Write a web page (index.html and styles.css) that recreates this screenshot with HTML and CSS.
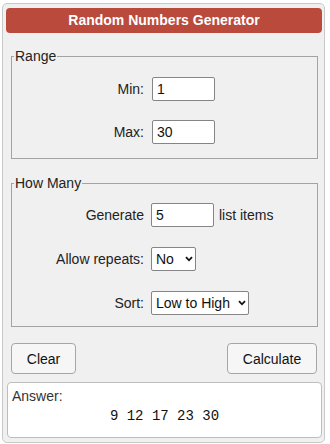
FILE: index.html
```html
<!DOCTYPE html>
<html lang="en">
<head>
    <meta charset="UTF-8">
    <meta name="viewport" content="width=device-width, initial-scale=1.0">
    <title>Random Numbers Generator</title>
    <link rel="stylesheet" href="styles.css">
</head>
<body>
    <div class="calc">
        <div class="calc-title">Random Numbers Generator</div>

        <fieldset class="group">
            <legend>Range</legend>
            <div class="rows rows-range">
                <label class="row-label" for="min">Min:</label>
                <div class="row-field"><input class="num" id="min" type="text" value="1"></div>
                <label class="row-label" for="max">Max:</label>
                <div class="row-field"><input class="num" id="max" type="text" value="30"></div>
            </div>
        </fieldset>

        <fieldset class="group group-many">
            <legend>How Many</legend>
            <div class="rows rows-many">
                <label class="row-label" for="count">Generate</label>
                <div class="row-field"><input class="num" id="count" type="text" value="5"><span>list items</span></div>
                <label class="row-label" for="repeats">Allow repeats:</label>
                <div class="row-field">
                    <span class="select-wrap">
                        <select class="pick pick-short" id="repeats">
                            <option>No</option>
                            <option>Yes</option>
                        </select>
                        <svg class="chevron" width="8" height="6" viewBox="0 0 8 6"><path d="M1 1.2 L4 4.3 L7 1.2" fill="none" stroke="#111" stroke-width="1.8"/></svg>
                    </span>
                </div>
                <label class="row-label" for="sort">Sort:</label>
                <div class="row-field">
                    <span class="select-wrap">
                        <select class="pick pick-long" id="sort">
                            <option>Low to High</option>
                            <option>High to Low</option>
                            <option>None</option>
                        </select>
                        <svg class="chevron" width="8" height="6" viewBox="0 0 8 6"><path d="M1 1.2 L4 4.3 L7 1.2" fill="none" stroke="#111" stroke-width="1.8"/></svg>
                    </span>
                </div>
            </div>
        </fieldset>

        <div class="actions">
            <button class="btn btn-clear" onclick="clearForm()">Clear</button>
            <button class="btn btn-calc" onclick="calculate()">Calculate</button>
        </div>

        <div class="answer">
            <div class="answer-label">Answer:</div>
            <div class="answer-value" id="answer">9 12 17 23 30</div>
        </div>
    </div>
    <script>
        function calculate() {
            const min = parseInt(document.getElementById('min').value, 10);
            const max = parseInt(document.getElementById('max').value, 10);
            const count = parseInt(document.getElementById('count').value, 10);
            const repeats = document.getElementById('repeats').value === 'Yes';
            const sort = document.getElementById('sort').value;
            const out = document.getElementById('answer');

            if (isNaN(min) || isNaN(max) || isNaN(count) || max < min) {
                out.textContent = 'Check the range';
                return;
            }
            if (!repeats && count > max - min + 1) {
                out.textContent = 'Range too small';
                return;
            }

            let nums = [];
            while (nums.length < count) {
                const n = min + Math.floor(Math.random() * (max - min + 1));
                if (repeats || !nums.includes(n)) nums.push(n);
            }
            if (sort === 'Low to High') nums.sort((a, b) => a - b);
            if (sort === 'High to Low') nums.sort((a, b) => b - a);
            out.textContent = nums.join(' ');
        }

        function clearForm() {
            document.getElementById('min').value = '';
            document.getElementById('max').value = '';
            document.getElementById('count').value = '';
            document.getElementById('answer').textContent = '';
        }
    </script>
</body>
</html>
```

FILE: styles.css
```css
body {
    margin: 0;
    padding: 3px 0 0 2px;
    font-family: 'Liberation Sans', Arial, sans-serif;
    font-size: 14px;
    color: #222;
    background: #fff;
}

.calc {
    width: 323px;
    box-sizing: border-box;
    background: #f0f0f0;
    border: 1px solid #c9c9c9;
    border-radius: 5px;
    padding: 4px 2px 4px 3px;
}

.calc-title {
    height: 25px;
    line-height: 25px;
    background: #b94a3c;
    color: #fff;
    font-weight: bold;
    text-align: center;
    border-radius: 4px;
}

.group {
    margin: 15px 4px 0 5px;
    padding: 0 2px 14px 2px;
    border: 1px solid #a3a3a3;
    min-width: 0;
}

.group legend {
    padding: 0 1px;
    line-height: 16px;
    color: #222;
}

.group-many {
    margin-top: 16px;
    padding-bottom: 11px;
}

.rows {
    display: grid;
    grid-template-columns: 130px auto;
    column-gap: 8px;
    align-items: center;
}

.rows-range {
    padding-top: 13px;
    row-gap: 19px;
}

.rows-many {
    padding-top: 12px;
    row-gap: 20px;
    column-gap: 7px;
}

.row-label {
    text-align: right;
}

.row-field {
    display: flex;
    align-items: center;
    gap: 5px;
    height: 24px;
}

.num {
    box-sizing: border-box;
    width: 63px;
    height: 24px;
    padding: 0 4px;
    border: 1px solid #858585;
    border-radius: 2px;
    background: #fff;
    font-family: inherit;
    font-size: 14px;
    color: #111;
}

.select-wrap {
    position: relative;
    display: inline-block;
    height: 24px;
}

.pick {
    -webkit-appearance: none;
    appearance: none;
    box-sizing: border-box;
    height: 24px;
    padding: 0 0 0 4px;
    border: 1px solid #858585;
    border-radius: 2px;
    background: #fff;
    font-family: inherit;
    font-size: 14px;
    color: #111;
}

.pick-short {
    width: 45px;
}

.pick-long {
    width: 98px;
}

.chevron {
    position: absolute;
    right: 3px;
    top: 9px;
    pointer-events: none;
}

.actions {
    display: flex;
    justify-content: space-between;
    margin: 16px 5px 0 5px;
}

.btn {
    height: 31px;
    box-sizing: border-box;
    border: 1px solid #a6a6a6;
    border-radius: 4px;
    background: #f6f6f6;
    font-family: inherit;
    font-size: 14px;
    color: #111;
    cursor: pointer;
}

.btn-clear {
    width: 65px;
}

.btn-calc {
    width: 90px;
}

.btn:hover {
    background: #e9e9e9;
}

.answer {
    margin: 8px 0 0 1px;
    height: 56px;
    box-sizing: border-box;
    padding: 5px 4px 0 4px;
    background: #fff;
    border: 1px solid #bdbdbd;
    border-radius: 4px;
}

.answer-label {
    line-height: 16px;
    color: #333;
}

.answer-value {
    margin-top: 4px;
    font-family: 'Liberation Mono', 'Courier New', monospace;
    font-size: 14px;
    line-height: 16px;
    text-align: center;
    color: #111;
}
```
